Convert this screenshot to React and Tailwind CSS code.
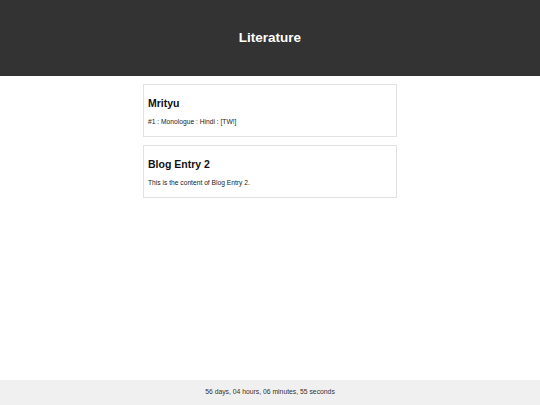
export default function App() {
  const posts = [
    { title: 'Mrityu', body: '#1 : Monologue : Hindi : [TW!]' },
    { title: 'Blog Entry 2', body: 'This is the content of Blog Entry 2.' },
  ]

  return (
    <div className="min-h-screen flex flex-col bg-white font-['Liberation_Sans',Arial,sans-serif] text-[#111]">
      <header className="h-[76px] bg-[#333333] flex items-center justify-center">
        <h1 className="text-[13.5px] font-bold text-white">Literature</h1>
      </header>

      <main className="flex-1 w-[254px] mx-auto pt-[8px] flex flex-col gap-[8px]">
        {posts.map((post, idx) => (
          <div key={idx} className="border border-[#e2e2e2] px-[4px] pt-[12px] h-[53px]">
            <h2 className="text-[10.5px] leading-[12px] font-bold">{post.title}</h2>
            <p className="text-[6.7px] leading-[9px] mt-[8px] text-[#222]">{post.body}</p>
          </div>
        ))}
      </main>

      <footer className="h-[25px] bg-[#f0f0f0] flex items-center justify-center">
        <p className="text-[6.8px] text-[#333]">56 days, 04 hours, 06 minutes, 55 seconds</p>
      </footer>
    </div>
  )
}
